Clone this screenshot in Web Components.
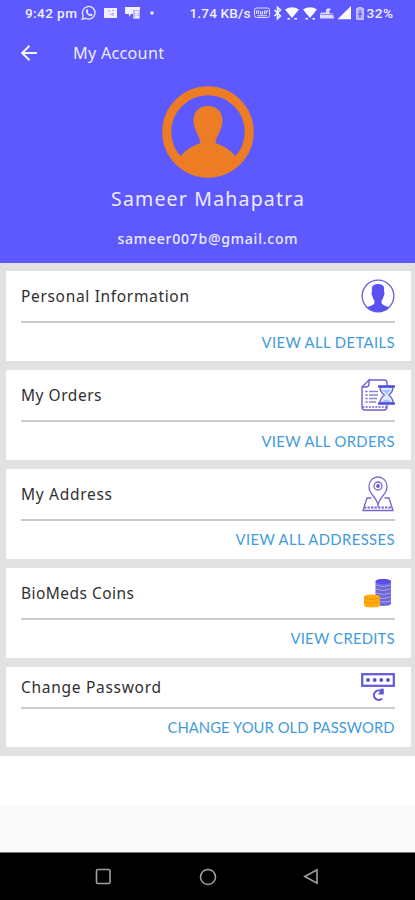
<!DOCTYPE html>
<html lang="en">
<head>
<meta charset="utf-8">
<title>My Account</title>
<style>
html,body{margin:0;padding:0;background:#fff}
body{width:415px;height:900px;overflow:hidden}
</style>
</head>
<body>
<account-screen></account-screen>
<script>
const define = (name, html, setup) => {
  const t = document.createElement('template');
  t.innerHTML = html;
  customElements.define(name, class extends HTMLElement {
    constructor() {
      super();
      this.attachShadow({ mode: 'open' }).append(t.content.cloneNode(true));
    }
    connectedCallback() { if (setup) setup.call(this, this.shadowRoot); }
  });
};

/* A single line whose tracking is set so that it spans the "width" attribute. */
define('tracked-text', `<style>:host{display:block;white-space:nowrap;flex:none}span{display:inline-block}</style><span></span>`, function (r) {
  const s = r.querySelector('span');
  s.textContent = this.getAttribute('text');
  const w = +this.getAttribute('width');
  const gap = (w - s.getBoundingClientRect().width) / (s.textContent.length - 1);
  s.style.letterSpacing = gap + 'px';
  s.style.marginRight = -gap + 'px';
});

const ICONS = {
  person: `<svg width="34" height="34" viewBox="0 0 34 34"><defs><clipPath id="c"><circle cx="17" cy="17" r="15.8"/></clipPath></defs><circle cx="17" cy="17" r="15.8" fill="#fff" stroke="#6a60d4" stroke-width="1.3"/><path clip-path="url(#c)" fill="#5a52f0" d="M11 8.5Q11.500 5 17 5Q22.500 5 23 8.500L23.200 13Q24 15 22.700 17Q22 20 20.600 21.500V24.500Q22 26.500 29 28.500L31 34H3L5 28.500Q12 26.500 13.400 24.500V21.500Q12 20 11.300 17Q10 15 10.800 13Z"/></svg>`,
  orders: `<svg width="34" height="34" viewBox="0 0 34 34" fill="none" stroke="#6c63cf" stroke-width="1.4"><path d="M8 2H23.500Q26 2 26 5V8M26 27V29Q26 32 23 32H4Q1 32 1 29V9L8 2V6Q8 9 5 9H1"/><path d="M1.500 29H26" stroke-dasharray="2 1.200"/><g stroke-width="1.300"><path d="M4.500 13.500h2M4.500 17h2M4.500 20.500h2M4.500 24h2"/><path d="M8 13.500h9M8 17h9M8 20.500h8M8 24h7" stroke="#8b85d2"/></g><path d="M19 9H32Q32 14 27.800 17Q32 20 32 25H19Q19 20 23.300 17Q19 14 19 9Z" fill="#dcecff"/><path d="M21 12h9l-4.500 4zM21 24q4.500-5 9 0z" fill="#9cc2fa" stroke="none"/><path d="M17 8.300H34M17 25.700H34" stroke="#5148df" stroke-width="2.200"/></svg>`,
  pin: `<svg width="34" height="36" viewBox="0 0 34 36" fill="none" stroke="#7468cf" stroke-width="1.300"><path d="M17 28Q15 23 11.500 19Q8 15 8 10A9 9 0 0 1 26 10Q26 15 22.500 19Q19 23 17 28Z"/><circle cx="17" cy="10" r="4"/><circle cx="17" cy="10" r="1.300" fill="#5148c8"/><path d="M10.500 22H6L2 34.500H32L28 22H23.500"/><path d="M3 31.500H31" stroke-width="2" stroke-dasharray="2.400 1.100"/><path d="M17 27v4"/></svg>`,
  coins: `<svg style="margin-right:1.500px" width="30" height="30" viewBox="0 0 30 30"><path d="M12.500 3.500Q12.500 1 20 1T28 3.500V25.500Q28 28 20 28T12.500 25.500Z" fill="#6f69d9"/><ellipse cx="20.300" cy="3.500" rx="7.800" ry="2.400" fill="#594df2"/><g fill="none" stroke="#aaa7e8" stroke-width=".9"><path d="M12.500 7q7.500 3 15.500 0M12.500 11q7.500 3 15.500 0M12.500 15q7.500 3 15.500 0M12.500 19q7.500 3 15.500 0M16 23.500q6 1.500 12-.5"/></g><path d="M1 19Q1 16.500 9 16.500T17 19V27Q17 29.500 9 29.500T1 27Z" fill="#ffad0a"/><path d="M1 19.500q8 3.500 16 0M1 23.500q8 3.500 16 0" fill="none" stroke="#e98f12" stroke-width=".9"/></svg>`,
  password: `<svg width="34" height="30" viewBox="0 0 34 30" fill="none" stroke="#6258dc"><rect x="1.200" y="2.200" width="31.600" height="11.600" stroke-width="2.200"/><g fill="#5850cc" stroke="none"><circle cx="7" cy="8" r="1.900"/><circle cx="13.700" cy="8" r="1.900"/><circle cx="20.300" cy="8" r="1.900"/><circle cx="27" cy="8" r="1.900"/></g><path d="M20.300 19.300A4.700 4.700 0 1 0 21 26.500" stroke-width="2.100"/><path d="M17 22.500h5.800v-5.800h-3.500v2.300z" fill="#6258dc" stroke="none"/></svg>`
};

define('status-bar', `<style>
:host{display:flex;height:26px;align-items:center;color:#f1f0ff;font:500 13.6px/16px Roboto,sans-serif;padding:0 22px 0 25px;justify-content:space-between}
div{display:flex;align-items:center}svg{display:block;flex:none}
</style>
<div><tracked-text text="9:42 pm" width="52"></tracked-text>
<svg style="margin-left:3px" width="78" height="18" viewBox="0 0 78 18" fill="none" stroke="#e9e8ff" stroke-width="1.300"><path d="M2.200 15.300L3.200 11.800A6.300 6.300 0 1 1 5.700 14.300Z"/><path d="M6.300 5.500q1-.8 1.500.3l.5 1.200-.7 1q.9 1.700 2.500 2.400l.9-.9 1.700.9q-.4 2-2.300 1.700Q6.500 11 5.900 7.500Z" fill="#e9e8ff" stroke="none"/><path d="M24 4h13v10h-13z" fill="#f1f0ff" stroke="none"/><path d="M28 7h2M32 6l2 1M30 11l3-2v3" stroke="#9d9aff" stroke-width="1"/><path d="M45 3h15v7h-9l-2 3v-3h-4z" fill="#f1f0ff" stroke="none"/><path d="M53 6h7v9h-7z" fill="#b9b7ff" stroke="none"/><path d="M55 8h4M55 10.500h3M55 13h4" stroke="#fff"/><circle cx="72" cy="9" r="1.800" fill="#f1f0ff" stroke="none"/></svg></div>
<div><tracked-text text="1.74 KB/s" width="61"></tracked-text>
<svg style="margin:0 2px 0 2px" width="112" height="18" viewBox="0 0 112 18" fill="none" stroke="#dddcff"><rect x="1.500" y="4" width="15" height="9.500" rx="2"/><path d="M3.500 10V7h2v3m2-3v3h2V7m2 3V7h3l-2 3M4 11.800h10" stroke-width="1.100"/><path d="M21.500 6l6 6-3 2.700V3.300l3 2.700-6 6" stroke="#f1f0ff" stroke-width="1.600"/><g fill="#fbfaff" stroke="none"><path d="M32 5.500q7-4.500 14 0L39 14ZM50 5.500q7-4.500 14 0L57 14ZM34.500 14h2.500v1.500h-2.500zM41.500 14h2.500v1.500h-2.500zM52.500 14h2.500v1.500h-2.500zM59.500 14h2.500v1.500h-2.500zM84.500 15.300L98 2V15.300Z"/><path d="M68 8.500h5V6q1-3 5-1l-2 2.500 1 2h3l1 5H67v-4z" fill="#dddcff"/></g><path d="M68 10.500h12" stroke="#8a87fb"/><path d="M103.500 4.500h1.500v-1h4v1h1.500v11h-7z" fill="#b5b3ff" stroke="#c9c7ff"/><path d="M107 6v3m-2 1h4m-2 0v4" stroke="#615dff" stroke-width="1.300"/></svg>
<tracked-text text="32%" width="26.500"></tracked-text></div>`);

define('profile-header', `<style>
:host{display:flex;flex-direction:column;align-items:center;height:263px;background:#5d59ff;color:#edecff;font-family:"Noto Sans",sans-serif}
status-bar{align-self:stretch}
nav{align-self:stretch;display:flex;align-items:center;height:51px;margin-top:1px;padding-left:20px;gap:35px;font-size:16.200px;line-height:24px}
svg{display:block;flex:none}.photo{margin-top:8px}
.name{font-size:19.500px;line-height:26px;margin-top:8px}.mail{font-size:14px;line-height:20px;margin-top:17px;font-weight:500}
</style>
<status-bar></status-bar>
<nav><svg width="18" height="18" viewBox="0 0 18 18" fill="none" stroke="#f3f2ff" stroke-width="2"><path d="M17 9H2.500M9.500 1.700L2.200 9l7.300 7.300"/></svg><tracked-text text="My Account" width="91"></tracked-text></nav>
<svg class="photo" width="92" height="92" viewBox="0 0 92 92"><circle cx="46" cy="46" r="41.200" fill="none" stroke="#ec7d24" stroke-width="9"/><path fill="#ec7d24" d="M46 20C55 20 60.500 26 60.500 35C60.500 44 54 50 53.500 57Q66 61 74 70.500L76 73A40 40 0 0 1 16 73L18 70.500Q26 61 38.500 57C38 50 31.500 44 31.500 35C31.500 26 37 20 46 20Z"/></svg>
<tracked-text class="name" text="Sameer Mahapatra" width="193"></tracked-text>
<tracked-text class="mail" text="sameer007b@gmail.com" width="180"></tracked-text>`);

define('account-card', `<style>
:host{display:flex;flex-direction:column;background:#fff;height:90.400px;padding:0 16px 0 15px;box-sizing:border-box;border-radius:1px;--head:50px}
:host([compact]){height:80.500px;--head:40px}
header{height:var(--head);display:flex;align-items:center;justify-content:space-between;border-bottom:2px solid #cccacc;font:15.500px/22px "Noto Sans",sans-serif;color:#303030;box-sizing:content-box}
footer{flex:1;display:flex;align-items:center;justify-content:flex-end;font:14.800px/20px Lato,sans-serif;color:#429bdc}
footer tracked-text{margin-top:-1px}
i{display:flex}svg{display:block}
</style><header></header><footer></footer>`, function (r) {
  const a = n => this.getAttribute(n);
  r.querySelector('header').innerHTML = `<tracked-text text="${a('heading')}" width="${a('hw')}"></tracked-text><i>${ICONS[a('icon')]}</i>`;
  r.querySelector('footer').innerHTML = `<tracked-text text="${a('action')}" width="${a('aw')}"></tracked-text>`;
});

define('card-list', `<style>:host{display:flex;flex-direction:column;gap:8.500px;background:#e1e1e1;padding:8px 4.500px 8px 6px;height:492.500px;box-sizing:border-box}</style><slot></slot>`);

define('system-nav', `<style>:host{display:flex;align-items:center;justify-content:space-between;padding:0 96px 0 95px;height:48px;background:#000;box-sizing:border-box;border-top:1px solid #777}svg{display:block}</style>
<svg width="17" height="17" viewBox="0 0 17 17" fill="none" stroke="#a0a0a0" stroke-width="1.600"><rect x="1.500" y="1.500" width="13.500" height="14" rx="1.500"/></svg>
<svg width="18" height="18" viewBox="0 0 18 18" fill="none" stroke="#a0a0a0" stroke-width="1.600"><circle cx="9" cy="9" r="7.500"/></svg>
<svg width="16" height="17" viewBox="0 0 16 17" fill="none" stroke="#a0a0a0" stroke-width="1.600"><path d="M14 1.800V15.200L1.800 8.500Z"/></svg>`);

define('account-screen', `<style>
:host{display:flex;flex-direction:column;width:415px;height:900px;background:#fff}
profile-header,card-list,system-nav{flex:none}.space{flex:1}.strip{height:46px;background:#fafafa}
</style>
<profile-header></profile-header>
<card-list>
<account-card heading="Personal Information" hw="168" icon="person" action="VIEW ALL DETAILS" aw="133"></account-card>
<account-card heading="My Orders" hw="80.500" icon="orders" action="VIEW ALL ORDERS" aw="133"></account-card>
<account-card heading="My Address" hw="91" icon="pin" action="VIEW ALL ADDRESSES" aw="159"></account-card>
<account-card heading="BioMeds Coins" hw="113" icon="coins" action="VIEW CREDITS" aw="104"></account-card>
<account-card compact heading="Change Password" hw="140" icon="password" action="CHANGE YOUR OLD PASSWORD" aw="227"></account-card>
</card-list>
<div class="space"></div><div class="strip"></div>
<system-nav></system-nav>`);
</script>
</body>
</html>
